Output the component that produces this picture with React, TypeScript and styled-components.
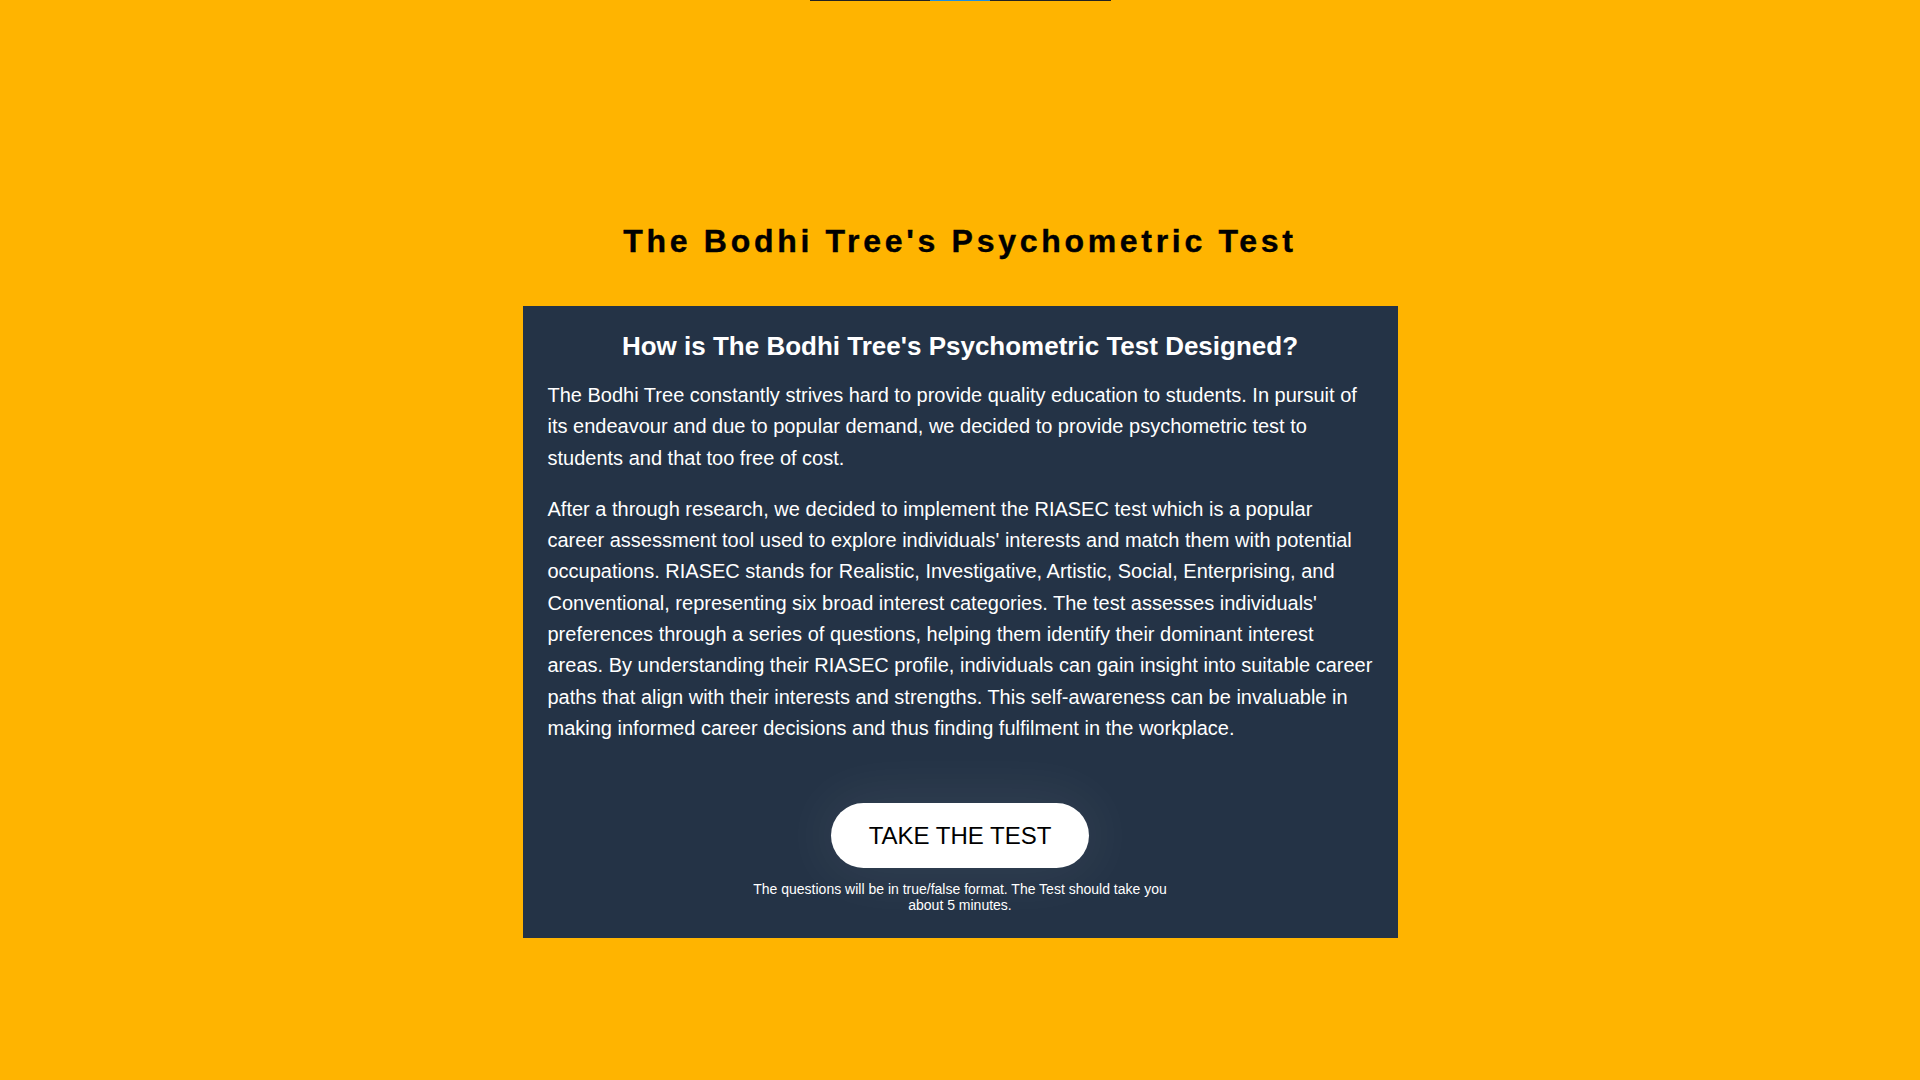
import React from "react";
import styled, { createGlobalStyle } from "styled-components";

const GlobalStyle = createGlobalStyle`
  html, body {
    margin: 0;
    padding: 0;
    background: #ffb400;
  }
  body {
    font-family: "Liberation Sans", Arial, Helvetica, sans-serif;
  }
  * { box-sizing: border-box; }
`;

const Page = styled.div`
  min-height: 100vh;
  background: #ffb400;
  display: flex;
  flex-direction: column;
`;

const LoaderStrip = styled.div`
  height: 1px;
  display: flex;
  justify-content: center;
`;

const LoaderTrack = styled.div`
  width: 301px;
  height: 1px;
  background: #222222;
  display: flex;
`;

const LoaderFill = styled.div<{ $offset: number; $width: number }>`
  margin-left: ${(p) => p.$offset}px;
  width: ${(p) => p.$width}px;
  height: 1px;
  background: #1b8fe0;
`;

const Main = styled.main`
  padding-top: 222px;
  display: flex;
  flex-direction: column;
  align-items: center;
`;

const Title = styled.h1`
  margin: 0 0 46px;
  font-size: 32px;
  font-weight: 700;
  letter-spacing: 3.7px;
  color: #000000;
  text-align: center;
  line-height: normal;
  -webkit-text-stroke: 0.4px #000000;
`;

const Card = styled.section`
  width: 875px;
  padding: 26px 25px 25px;
  background: #243346;
  color: #ffffff;
`;

const CardHeading = styled.h2`
  margin: 0;
  font-size: 26px;
  font-weight: 700;
  text-align: center;
  line-height: 28px;
`;

const Paragraph = styled.p`
  margin: 20px 0;
  font-size: 20px;
  line-height: 31.3px;
`;

const Cta = styled.div`
  padding-top: 39px;
  display: flex;
  flex-direction: column;
  align-items: center;
`;

const TestButton = styled.button`
  height: 65px;
  padding: 0 38px;
  border: none;
  border-radius: 999px;
  background: #ffffff;
  color: #000000;
  font-family: "Liberation Sans", Arial, Helvetica, sans-serif;
  font-size: 24px;
  font-weight: 400;
  cursor: pointer;
  box-shadow: 0 0 60px 6px rgba(255, 255, 255, 0.07);
`;

const Note = styled.p`
  margin: 13px 0 0;
  max-width: 430px;
  font-size: 14px;
  line-height: normal;
  text-align: center;
`;

export default function App() {
  return (
    <>
      <GlobalStyle />
      <Page>
        <LoaderStrip>
          <LoaderTrack>
            <LoaderFill $offset={120} $width={60} />
          </LoaderTrack>
        </LoaderStrip>
        <Main>
          <Title>The Bodhi Tree's Psychometric Test</Title>
          <Card>
            <CardHeading>How is The Bodhi Tree's Psychometric Test Designed?</CardHeading>
            <Paragraph>
              The Bodhi Tree constantly strives hard to provide quality education to students. In pursuit of its
              endeavour and due to popular demand, we decided to provide psychometric test to students and that too
              free of cost.
            </Paragraph>
            <Paragraph>
              After a through research, we decided to implement the RIASEC test which is a popular career assessment
              tool used to explore individuals' interests and match them with potential occupations. RIASEC stands for
              Realistic, Investigative, Artistic, Social, Enterprising, and Conventional, representing six broad
              interest categories. The test assesses individuals' preferences through a series of questions, helping
              them identify their dominant interest areas. By understanding their RIASEC profile, individuals can gain
              insight into suitable career paths that align with their interests and strengths. This self-awareness can
              be invaluable in making informed career decisions and thus finding fulfilment in the workplace.
            </Paragraph>
            <Cta>
              <TestButton>TAKE THE TEST</TestButton>
              <Note>
                The questions will be in true/false format. The Test should take you about 5 minutes.
              </Note>
            </Cta>
          </Card>
        </Main>
      </Page>
    </>
  );
}
